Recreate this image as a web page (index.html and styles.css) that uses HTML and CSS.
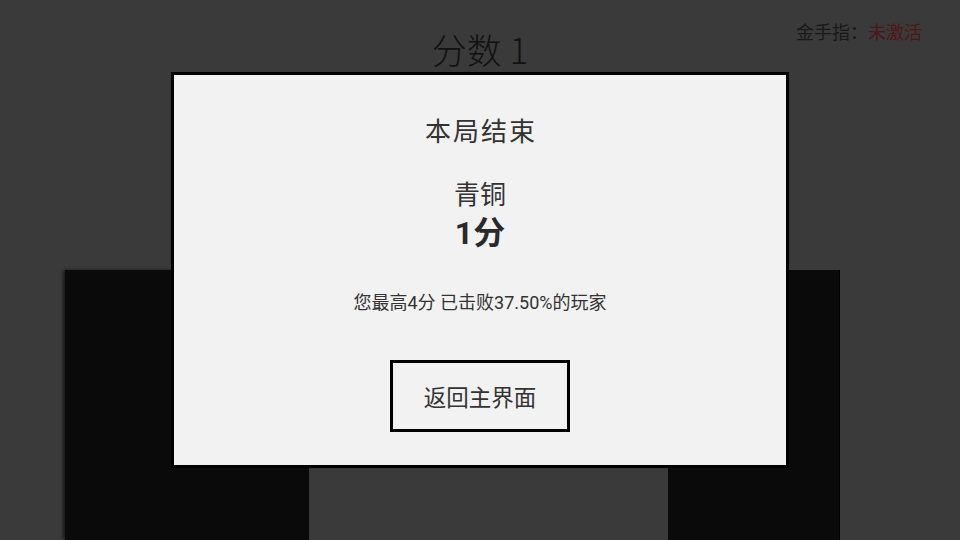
FILE: index.html
```html
<!DOCTYPE html>
<html lang="zh-CN">
<head>
<meta charset="utf-8">
<title>分数 1</title>
<link rel="stylesheet" href="styles.css">
</head>
<body>
<div class="game">
  <div class="cheat">金手指：<span class="cheat-off">未激活</span></div>
  <header class="score">分数 1</header>
  <div class="board">
    <div class="tile tile-a"></div>
    <div class="lane"></div>
    <div class="tile tile-b"></div>
  </div>
  <div class="modal">
    <h2 class="modal-title">本局结束</h2>
    <div class="rank">青铜</div>
    <div class="points">1分</div>
    <p class="summary">您最高4分 已击败37.50%的玩家</p>
    <button class="back-btn" type="button">返回主界面</button>
  </div>
</div>
</body>
</html>
```
FILE: styles.css
```css
* { box-sizing: border-box; }
html, body { margin: 0; padding: 0; }
body {
  width: 960px;
  height: 540px;
  overflow: hidden;
  font-family: "Noto Sans CJK SC", "Noto Sans", sans-serif;
}
.game {
  position: relative;
  width: 960px;
  height: 540px;
  background: #3a3a3a;
  overflow: hidden;
  display: flex;
  flex-direction: column;
}
.cheat {
  position: absolute;
  top: 18px;
  right: 38px;
  font-size: 18px;
  line-height: 26px;
  color: #191919;
}
.cheat-off { color: #4e1616; }
.score {
  margin-top: 29px;
  text-align: center;
  font-size: 35px;
  line-height: 40px;
  font-weight: 300;
  color: #111;
}
.board {
  margin-top: 201px;
  flex: 1;
  display: flex;
  padding-left: 65px;
}
.tile {
  background: #0a0a0a;
}
.tile-a {
  width: 244px;
  box-shadow: -2px 0 3px rgba(0,0,0,0.55);
}
.lane { width: 359px; }
.tile-b {
  width: 172px;
  border-right: 1px solid #000;
}
.modal {
  position: absolute;
  left: 171px;
  top: 72px;
  width: 618px;
  height: 396px;
  background: #f2f2f2;
  border: 3px solid #000;
  display: flex;
  flex-direction: column;
  align-items: center;
  padding-top: 42px;
  color: #333;
  font-family: "Roboto", "Noto Sans CJK SC", sans-serif;
}
.modal-title {
  margin: 0;
  font-size: 26px;
  line-height: 30px;
  font-weight: 400;
  letter-spacing: 2px;
  padding-left: 2px;
}
.rank {
  margin-top: 33px;
  font-size: 26px;
  line-height: 30px;
}
.points {
  margin-top: 5px;
  font-size: 32px;
  line-height: 36px;
  font-weight: 700;
  color: #2a2a2a;
}
.summary {
  margin: 40px 0 0;
  font-size: 18px;
  line-height: 24px;
}
.back-btn {
  margin-top: 45px;
  width: 180px;
  height: 72px;
  background: #f2f2f2;
  border: 3px solid #000;
  font-family: inherit;
  font-size: 22.5px;
  color: #333;
  padding: 0;
  cursor: pointer;
}
```
